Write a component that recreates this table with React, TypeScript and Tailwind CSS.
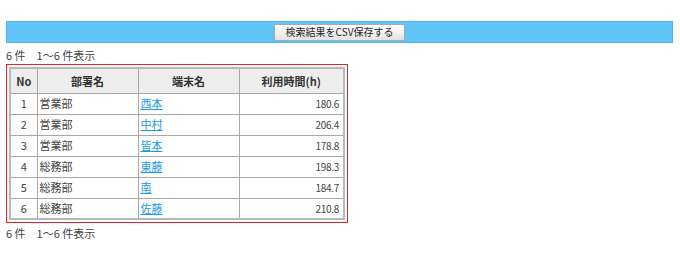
import React from 'react';

const rows = [
  { no: 1, dept: '営業部', name: '西本', hours: '180.6' },
  { no: 2, dept: '営業部', name: '中村', hours: '206.4' },
  { no: 3, dept: '営業部', name: '皆本', hours: '178.8' },
  { no: 4, dept: '総務部', name: '東藤', hours: '198.3' },
  { no: 5, dept: '総務部', name: '南', hours: '184.7' },
  { no: 6, dept: '総務部', name: '佐藤', hours: '210.8' },
];

const App: React.FC = () => {
  return (
    <div
      className="w-[680px] h-[266px] bg-white text-[11px] text-[#444] pt-[21px] px-[6px]"
      style={{ fontFamily: '"Noto Sans CJK JP", "Noto Sans", sans-serif' }}
    >
      {/* CSV bar */}
      <div className="w-[667px] h-[22px] bg-[#60c4f6] border border-[#4db6ee] flex items-center justify-center">
        <button className="w-[131px] h-[17px] rounded-[2px] border border-[#a9a9a9] bg-gradient-to-b from-white to-[#e4e4e4] text-[10px] leading-none text-[#222]">
          検索結果をCSV保存する
        </button>
      </div>

      <div className="mt-[5px] leading-[14px]">6 件　1〜6 件表示</div>

      {/* Result table */}
      <div className="mt-[2px] w-[342px] border border-[#e8222a] p-[2px]">
        <table className="w-[336px] border-collapse border-2 border-[#b8b8b8]">
          <thead>
            <tr className="h-[25px] bg-[#eeeeee] font-bold text-[#333]">
              <th className="w-[27px] border border-[#a8a8a8]">No</th>
              <th className="w-[101px] border border-[#a8a8a8]">部署名</th>
              <th className="w-[101px] border border-[#a8a8a8]">端末名</th>
              <th className="border border-[#a8a8a8]">利用時間(h)</th>
            </tr>
          </thead>
          <tbody>
            {rows.map((r) => (
              <tr key={r.no} className="h-[21px]">
                <td className="border border-[#a8a8a8] text-center">{r.no}</td>
                <td className="border border-[#a8a8a8] pl-[2px]">{r.dept}</td>
                <td className="border border-[#a8a8a8] pl-[2px]">
                  <a href="#" className="text-[#1b9ae4] underline">
                    {r.name}
                  </a>
                </td>
                <td className="border border-[#a8a8a8] text-right pr-[4px] text-[10px] tracking-[-0.3px]">
                  {r.hours}
                </td>
              </tr>
            ))}
          </tbody>
        </table>
      </div>

      <div className="mt-[3px] leading-[14px]">6 件　1〜6 件表示</div>
    </div>
  );
};

export default App;
